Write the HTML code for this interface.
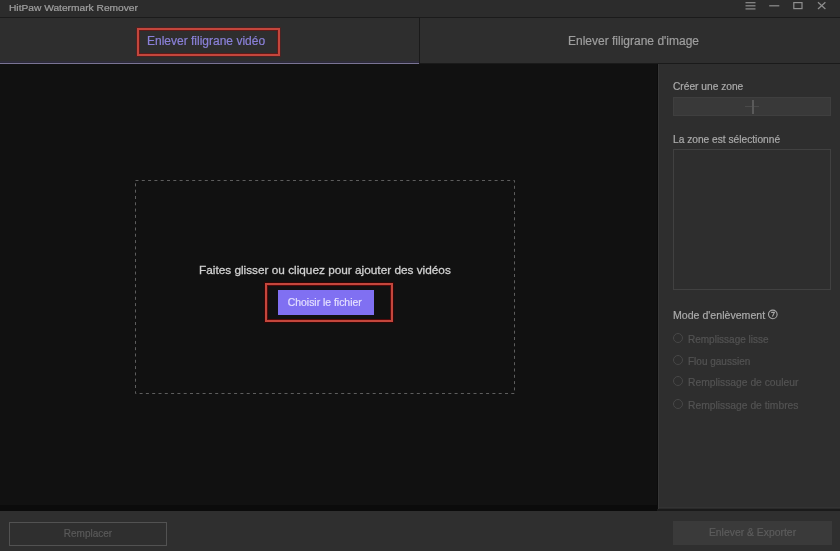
<!DOCTYPE html>
<html><head><meta charset="utf-8">
<style>
*{margin:0;padding:0;box-sizing:border-box}
html,body{width:840px;height:551px;overflow:hidden;background:#111111;font-family:"Liberation Sans",sans-serif}
.abs{-webkit-text-stroke:0.2px currentColor}
.abs{position:absolute;will-change:transform}
#title{left:0;top:0;width:840px;height:17px;background:#2c2c2c}
#title .t{left:9px;top:2px;font-size:9.6px;color:#a0a0a0;white-space:nowrap;transform:scaleX(1.064);transform-origin:0 0}
#tline{left:0;top:17px;width:840px;height:1px;background:#1b1b1b}
#tabs{left:0;top:18px;width:840px;height:46px;background:#2e2e2e}
#tab1txt{left:147px;top:34px;font-size:12px;color:#8a80d8;white-space:nowrap}
#tab2txt{left:568px;top:34px;font-size:12px;color:#9e9e9e;white-space:nowrap}
#tabdiv{left:419px;top:18px;width:1px;height:46px;background:#1a1a1a}
#uline{left:0;top:63px;width:419px;height:1px;background:#7a7494;box-shadow:0 -1px 0 #2c2a3a,0 -2px 0 #2f2d3a,0 1px 0 #0d0b20,0 2px 0 #100e1c}
#tline2{left:420px;top:63px;width:420px;height:1px;background:#1a1a1a}
#main{left:0;top:64px;width:658px;height:446px;background:#111111}

#droptxt{left:199px;top:263px;font-size:11.8px;color:#d0d0d0;white-space:nowrap;-webkit-text-stroke:0.3px currentColor}
#btn{left:278px;top:290px;width:96px;height:25px;background:#8070f2;color:#e4e0ff;font-size:10.4px;text-align:center;line-height:25px;padding-right:2.5px}
#red1{left:137px;top:28px;width:143px;height:28px;border:2px solid #c4463c;box-shadow:0 0 0 1px #4c2222,inset 0 0 0 1px #5e1a18}
#red2{left:265px;top:283px;width:128px;height:39px;border:2px solid #c4463c;box-shadow:0 0 0 1px #2e0606,inset 0 0 0 1px #520a0a}
#side{left:658px;top:64px;width:182px;height:446px;background:#2e2e2e}
#sidedk{left:657px;top:64px;width:1px;height:446px;background:#0c0c0c}
#sidehl{left:658px;top:64px;width:1px;height:446px;background:#373737}
.lbl{font-size:10.2px;color:#ababab;white-space:nowrap}
#zonebtn{left:673px;top:97px;width:158px;height:19px;background:#393939;border:1px solid #3f3f3f}
#plus1{left:745px;top:106px;width:14px;height:1px;background:#4a4a4a}
#plus2{left:751.5px;top:100px;width:1.5px;height:14px;background:#5a5a5a}
#zonebox{left:673px;top:149px;width:158px;height:141px;border:1px solid #414141}
.radio{width:10px;height:10px;border:1.5px solid #484848;border-radius:50%}
.rlbl{font-size:10.2px;color:#535353;white-space:nowrap}
#bottom{left:0;top:511px;width:840px;height:40px;background:#2f2f2f}
#mband{left:0;top:505px;width:657px;height:6px;background:#0b0b0b}
#pband1{left:659px;top:507px;width:181px;height:1px;background:#333333}
#pband2{left:659px;top:508px;width:181px;height:1px;background:#2a2a2a}
#bline{left:657px;top:509px;width:183px;height:2px;background:#1a1a1a}
#repl{left:9px;top:522px;width:158px;height:24px;border:1px solid #525252;color:#5a5a5a;font-size:10px;text-align:center;line-height:22px}
#export{left:673px;top:521px;width:159px;height:24px;background:#3a3a3a;color:#5c5c5c;font-size:10.4px;text-align:center;line-height:24px}
</style></head>
<body>
<div id="title" class="abs"><div class="t abs">HitPaw Watermark Remover</div>
  <svg class="abs" style="left:0;top:0" width="840" height="17">
    <g stroke="#8e8e8e" stroke-width="1.2" fill="none">
      <line x1="745.5" y1="2.7" x2="755.5" y2="2.7"/>
      <line x1="745.5" y1="5.8" x2="755.5" y2="5.8"/>
      <line x1="745.5" y1="8.9" x2="755.5" y2="8.9"/>
      <line x1="769.2" y1="5.8" x2="779.3" y2="5.8"/>
      <rect x="793.8" y="2.6" width="8.2" height="6" />
      <line x1="818" y1="2.2" x2="825.4" y2="9"/>
      <line x1="825.4" y1="2.2" x2="818" y2="9"/>
    </g>
  </svg>
</div>
<div id="tline" class="abs"></div>
<div id="tabs" class="abs"></div>
<div id="tabdiv" class="abs"></div>
<div id="tab1txt" class="abs">Enlever filigrane vidéo</div>
<div id="tab2txt" class="abs">Enlever filigrane d'image</div>
<div id="uline" class="abs"></div>
<div id="tline2" class="abs"></div>
<div id="main" class="abs"></div>
<svg class="abs" style="left:0;top:0" width="658" height="510"><rect x="135.5" y="180.5" width="379" height="213" fill="none" stroke="#5e5e5e" stroke-width="1" stroke-dasharray="3 3.3"/></svg>
<div id="droptxt" class="abs">Faites glisser ou cliquez pour ajouter des vidéos</div>
<div id="btn" class="abs">Choisir le fichier</div>
<div id="side" class="abs"></div>
<div id="sidedk" class="abs"></div>
<div id="sidehl" class="abs"></div>
<div class="abs lbl" style="left:673px;top:81px">Créer une zone</div>
<div id="zonebtn" class="abs"></div>
<div id="plus1" class="abs"></div>
<div id="plus2" class="abs"></div>
<div class="abs lbl" style="left:673px;top:134px">La zone est sélectionné</div>
<div id="zonebox" class="abs"></div>
<div class="abs lbl" style="left:673px;top:309px;font-size:10.6px">Mode d'enlèvement</div>
<svg class="abs" style="left:767px;top:309px" width="12" height="12"><circle cx="5.8" cy="5.4" r="4.3" stroke="#a8a8a8" stroke-width="1.1" fill="none"/><path d="M4.2 3.4 H7.4 L5.4 7.6" stroke="#a8a8a8" stroke-width="1.1" fill="none"/></svg>
<div class="abs radio" style="left:673px;top:333px"></div>
<div class="abs rlbl" style="left:688px;top:334px;font-size:10px">Remplissage lisse</div>
<div class="abs radio" style="left:673px;top:355px"></div>
<div class="abs rlbl" style="left:688px;top:356px;font-size:10px">Flou gaussien</div>
<div class="abs radio" style="left:673px;top:376px"></div>
<div class="abs rlbl" style="left:688px;top:377px;font-size:10.3px">Remplissage de couleur</div>
<div class="abs radio" style="left:673px;top:399px"></div>
<div class="abs rlbl" style="left:688px;top:400px;font-size:10.3px">Remplissage de timbres</div>
<div id="mband" class="abs"></div>
<div id="pband1" class="abs"></div>
<div id="pband2" class="abs"></div>
<div id="bline" class="abs"></div>
<div id="bottom" class="abs"></div>
<div id="repl" class="abs">Remplacer</div>
<div id="export" class="abs">Enlever &amp; Exporter</div>
<div id="red1" class="abs"></div>
<div id="red2" class="abs"></div>
</body></html>
